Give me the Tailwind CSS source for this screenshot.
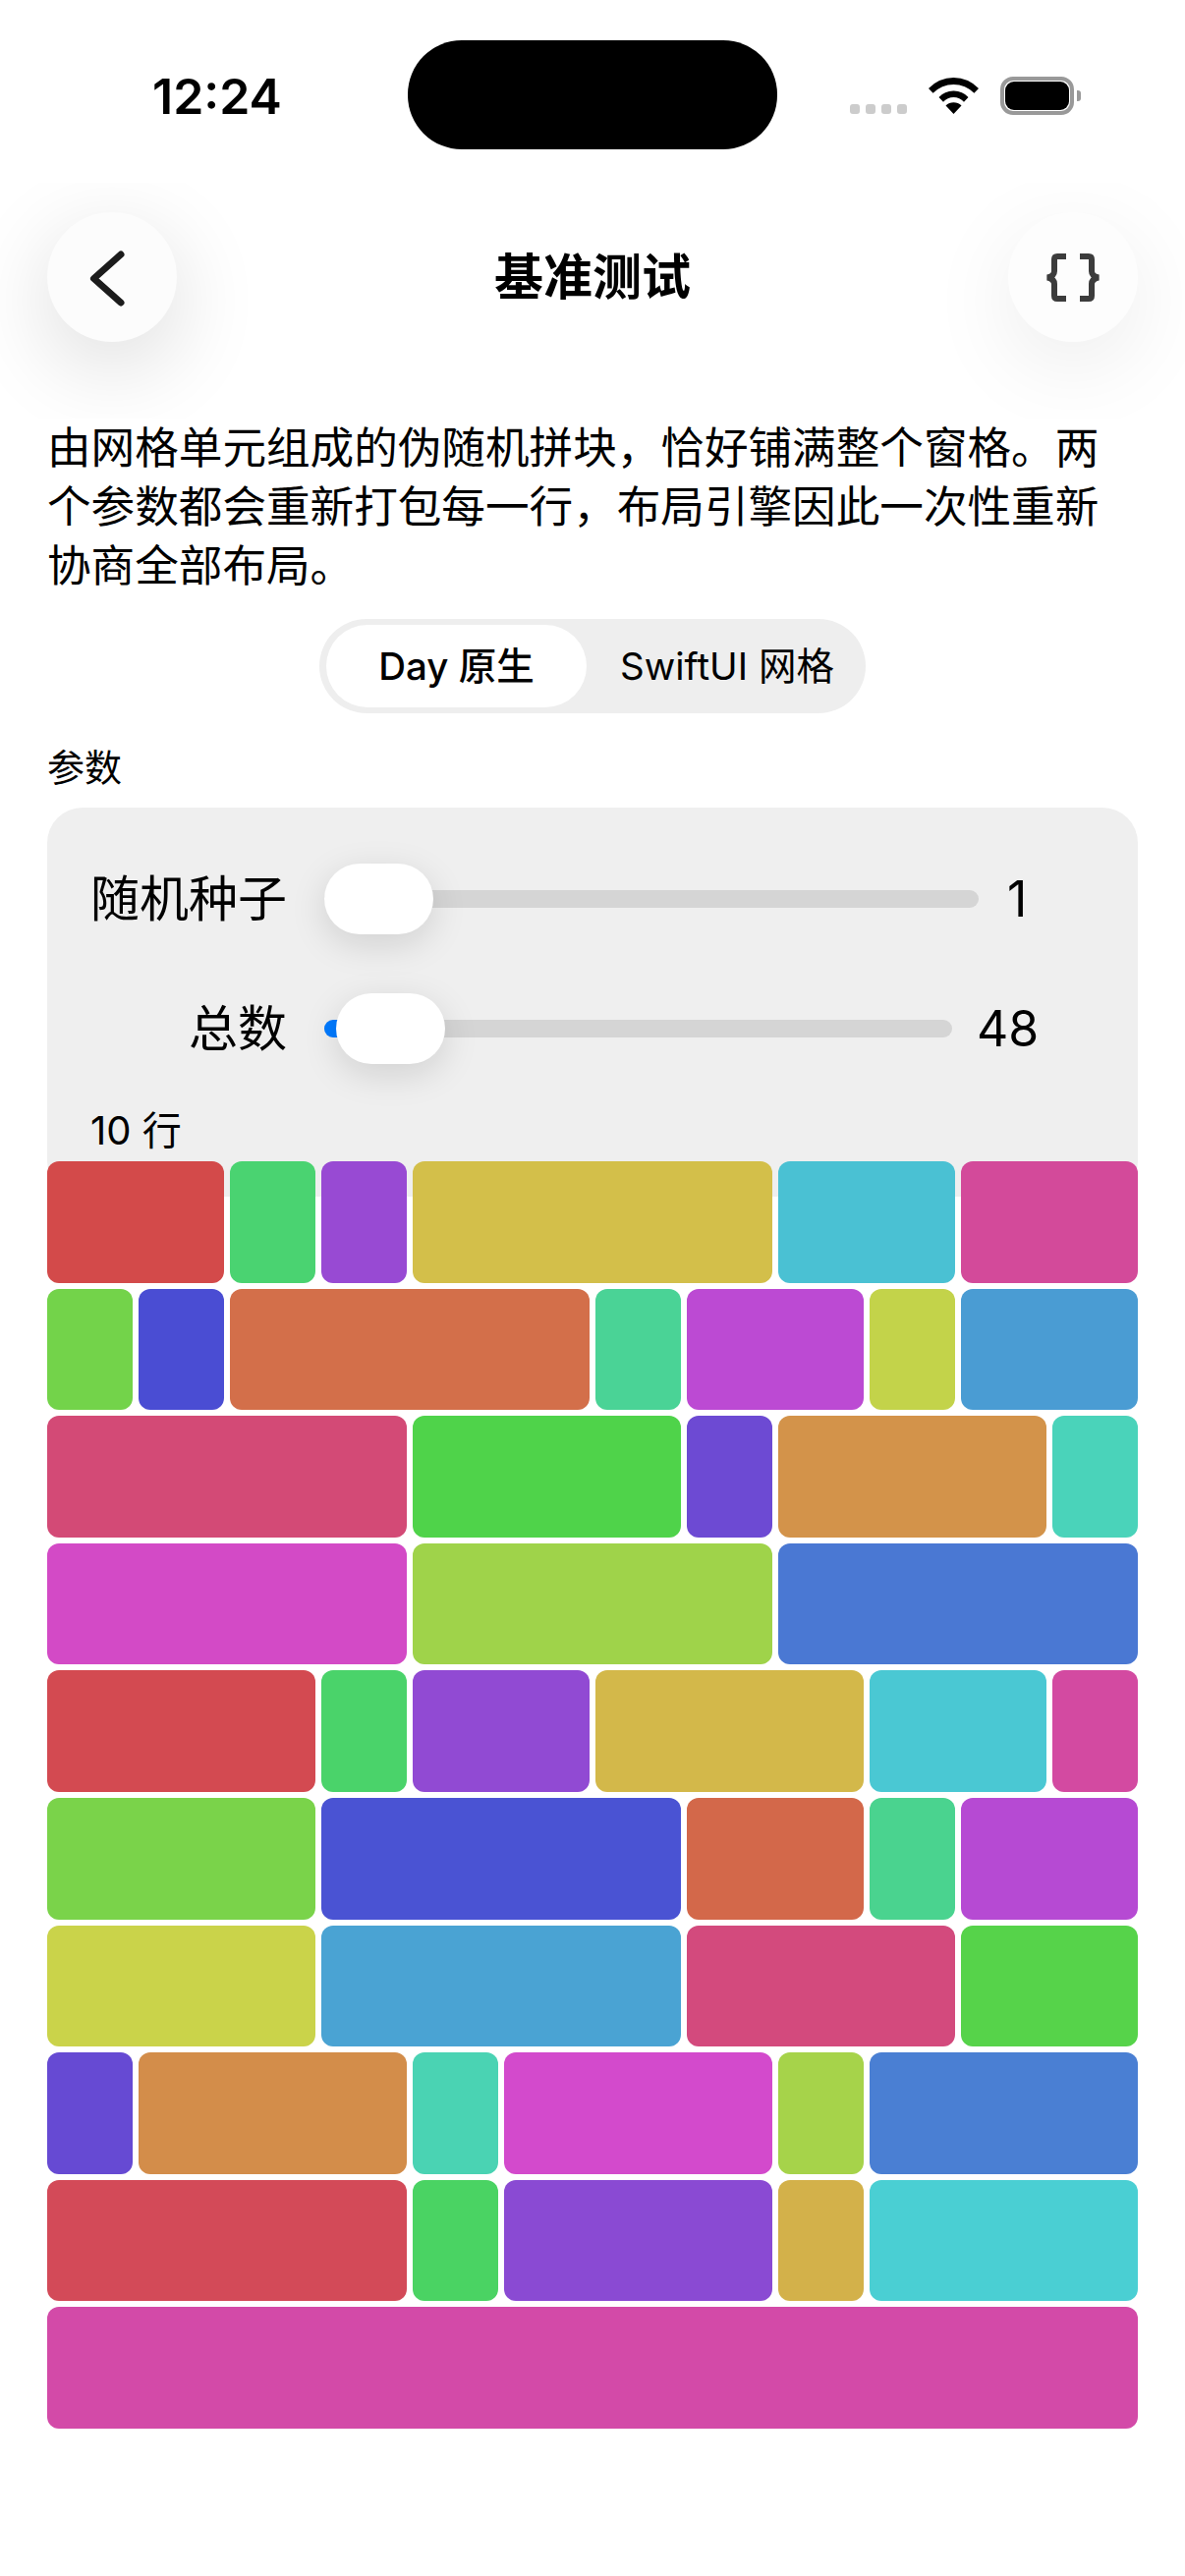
<!DOCTYPE html>
<html lang="zh-CN">
<head>
<meta charset="utf-8">
<script src="https://cdn.jsdelivr.net/npm/@tailwindcss/browser@4"></script>
</head>
<body class="bg-white">
<div class="w-[1206px] h-[2622px] overflow-hidden bg-white text-black font-[Inter,'Noto_Sans_CJK_SC',sans-serif]">
  <!-- status bar -->
  <div class="flex h-[186px]">
    <div class="w-[415px] pl-[155px] pt-[66px] text-[50px] leading-[64px] font-semibold">12:24</div>
    <div class="w-[376px] h-[111px] mt-[41px] rounded-[55px] bg-black"></div>
    <div class="flex items-start pl-[74px]">
      <div class="flex gap-[6px] mt-[106px]">
        <div class="w-[10px] h-[10px] rounded-[3px] bg-[#cccccc]"></div>
        <div class="w-[10px] h-[10px] rounded-[3px] bg-[#cccccc]"></div>
        <div class="w-[10px] h-[10px] rounded-[3px] bg-[#cccccc]"></div>
        <div class="w-[10px] h-[10px] rounded-[3px] bg-[#cccccc]"></div>
      </div>
      <svg class="ml-[22px] mt-[79px]" width="51" height="37" viewBox="0 0 51 37">
        <path d="M25.5 37 L17.5 28.5 A11.5 11.5 0 0 1 33.5 28.5 Z" fill="#000"/>
        <path d="M25.5 13.5 A20 20 0 0 1 40.5 20 L36 24.8 A14 14 0 0 0 15 24.8 L10.5 20 A20 20 0 0 1 25.5 13.5 Z" fill="#000"/>
        <path d="M25.5 0 A36 36 0 0 1 51 11 L46.4 15.8 A29 29 0 0 0 4.6 15.8 L0 11 A36 36 0 0 1 25.5 0 Z" fill="#000"/>
      </svg>
      <div class="ml-[22px] mt-[78px] w-[75px] h-[39px] rounded-[13px] border-[4px] border-[#999999] p-[1px]">
        <div class="w-full h-full rounded-[9px] bg-black"></div>
      </div>
      <div class="ml-[3px] mt-[92px] w-[4px] h-[11px] rounded-r-[3px] bg-[#999999]"></div>
    </div>
  </div>

  <!-- nav bar -->
  <div class="h-[240px] overflow-hidden flex items-start justify-between px-[48px] pt-[30px]">
    <div class="w-[132px] h-[132px] rounded-full bg-[#fcfcfc] shadow-[0_24px_90px_rgba(0,0,0,0.14)] flex items-center justify-center">
      <svg width="132" height="132" viewBox="0 0 132 132" fill="none">
        <path d="M75 43 L47.5 67.5 L75 92" stroke="#1c1c1c" stroke-width="7" stroke-linecap="round" stroke-linejoin="round"/>
      </svg>
    </div>
    <div class="mt-[34px] text-[50px] leading-[64px] font-semibold">基准测试</div>
    <div class="w-[132px] h-[132px] rounded-full bg-[#fdfdfd] shadow-[0_24px_90px_rgba(0,0,0,0.08)] flex items-center justify-center">
      <svg width="132" height="132" viewBox="0 0 132 132" fill="none">
        <path d="M59 45 H50 Q47 45 47 48 V60 Q47 65 40 66.5 Q47 68 47 73 V85 Q47 88 50 88 H59" stroke="#3c3c3c" stroke-width="6"/>
        <path d="M73 45 H82 Q85 45 85 48 V60 Q85 65 92 66.5 Q85 68 85 73 V85 Q85 88 82 88 H73" stroke="#3c3c3c" stroke-width="6"/>
      </svg>
    </div>
  </div>

  <!-- content -->
  <div class="px-[48px]">
    <p class="text-[44.6px] leading-[60px]">由网格单元组成的伪随机拼块，恰好铺满整个窗格。两个参数都会重新打包每一行，布局引擎因此一次性重新协商全部布局。</p>

    <div class="flex justify-center mt-[24px]">
      <div class="w-[556px] h-[96px] rounded-[48px] bg-[#eeeeee] p-[6px] pl-[7px] flex items-center text-[38.5px] leading-[50px]">
        <div class="w-[265px] h-[84px] rounded-[42px] bg-white flex items-center justify-center font-medium">Day 原生</div>
        <div class="flex-1 flex items-center justify-center pl-[8px]">SwiftUI 网格</div>
      </div>
    </div>

    <div class="mt-[30px] text-[38px] leading-[50px]">参数</div>

    <div class="mt-[16px] h-[396px] rounded-[36px] bg-[#efefef] pt-[57px] pl-[44px]">
      <div class="flex items-center h-[72px]">
        <div class="w-[200px] whitespace-nowrap text-right text-[50px] leading-[60px]">随机种子</div>
        <div class="relative ml-[38px] w-[666px] h-[18px] rounded-full bg-[#d5d5d5]">
          <div class="absolute left-0 top-[-27px] w-[111px] h-[72px] rounded-[36px] bg-white shadow-[0_10px_36px_rgba(0,0,0,0.13)]"></div>
        </div>
        <div class="ml-[29px] text-[50px] leading-[60px]">1</div>
      </div>
      <div class="flex items-center h-[72px] mt-[60px]">
        <div class="w-[200px] whitespace-nowrap text-right text-[50px] leading-[60px]">总数</div>
        <div class="relative ml-[38px] w-[639px] h-[18px] rounded-full bg-[#d5d5d5]">
          <div class="absolute left-0 top-0 w-[30px] h-[18px] rounded-l-full bg-[#007aff]"></div>
          <div class="absolute left-[12px] top-[-27px] w-[111px] h-[72px] rounded-[36px] bg-white shadow-[0_10px_36px_rgba(0,0,0,0.13)]"></div>
        </div>
        <div class="ml-[25px] text-[50px] leading-[60px]">48</div>
      </div>
      <div class="mt-[43px] text-[40px] leading-[50px]">10 行</div>
    </div>

    <!-- tiles -->
    <div class="relative mt-[-36px] grid grid-cols-12 gap-[6px] auto-rows-[123.6px]">
      <div class="col-span-2 rounded-[12px] bg-[hsl(0,61%,56%)]"></div>
      <div class="col-span-1 rounded-[12px] bg-[hsl(137,61%,56%)]"></div>
      <div class="col-span-1 rounded-[12px] bg-[hsl(274,61%,56%)]"></div>
      <div class="col-span-4 rounded-[12px] bg-[hsl(51,61%,56%)]"></div>
      <div class="col-span-2 rounded-[12px] bg-[hsl(188,61%,56%)]"></div>
      <div class="col-span-2 rounded-[12px] bg-[hsl(325,61%,56%)]"></div>

      <div class="col-span-1 rounded-[12px] bg-[hsl(102,61%,56%)]"></div>
      <div class="col-span-1 rounded-[12px] bg-[hsl(239,61%,56%)]"></div>
      <div class="col-span-4 rounded-[12px] bg-[hsl(16,61%,56%)]"></div>
      <div class="col-span-1 rounded-[12px] bg-[hsl(153,61%,56%)]"></div>
      <div class="col-span-2 rounded-[12px] bg-[hsl(290,61%,56%)]"></div>
      <div class="col-span-1 rounded-[12px] bg-[hsl(67,61%,56%)]"></div>
      <div class="col-span-2 rounded-[12px] bg-[hsl(204,61%,56%)]"></div>

      <div class="col-span-4 rounded-[12px] bg-[hsl(341,61%,56%)]"></div>
      <div class="col-span-3 rounded-[12px] bg-[hsl(118,61%,56%)]"></div>
      <div class="col-span-1 rounded-[12px] bg-[hsl(255,61%,56%)]"></div>
      <div class="col-span-3 rounded-[12px] bg-[hsl(32,61%,56%)]"></div>
      <div class="col-span-1 rounded-[12px] bg-[hsl(169,61%,56%)]"></div>

      <div class="col-span-4 rounded-[12px] bg-[hsl(306,61%,56%)]"></div>
      <div class="col-span-4 rounded-[12px] bg-[hsl(83,61%,56%)]"></div>
      <div class="col-span-4 rounded-[12px] bg-[hsl(220,61%,56%)]"></div>

      <div class="col-span-3 rounded-[12px] bg-[hsl(357,61%,56%)]"></div>
      <div class="col-span-1 rounded-[12px] bg-[hsl(134,61%,56%)]"></div>
      <div class="col-span-2 rounded-[12px] bg-[hsl(271,61%,56%)]"></div>
      <div class="col-span-3 rounded-[12px] bg-[hsl(48,61%,56%)]"></div>
      <div class="col-span-2 rounded-[12px] bg-[hsl(185,61%,56%)]"></div>
      <div class="col-span-1 rounded-[12px] bg-[hsl(322,61%,56%)]"></div>

      <div class="col-span-3 rounded-[12px] bg-[hsl(99,61%,56%)]"></div>
      <div class="col-span-4 rounded-[12px] bg-[hsl(236,61%,56%)]"></div>
      <div class="col-span-2 rounded-[12px] bg-[hsl(13,61%,56%)]"></div>
      <div class="col-span-1 rounded-[12px] bg-[hsl(150,61%,56%)]"></div>
      <div class="col-span-2 rounded-[12px] bg-[hsl(287,61%,56%)]"></div>

      <div class="col-span-3 rounded-[12px] bg-[hsl(64,61%,56%)]"></div>
      <div class="col-span-4 rounded-[12px] bg-[hsl(201,61%,56%)]"></div>
      <div class="col-span-3 rounded-[12px] bg-[hsl(338,61%,56%)]"></div>
      <div class="col-span-2 rounded-[12px] bg-[hsl(115,61%,56%)]"></div>

      <div class="col-span-1 rounded-[12px] bg-[hsl(252,61%,56%)]"></div>
      <div class="col-span-3 rounded-[12px] bg-[hsl(29,61%,56%)]"></div>
      <div class="col-span-1 rounded-[12px] bg-[hsl(166,61%,56%)]"></div>
      <div class="col-span-3 rounded-[12px] bg-[hsl(303,61%,56%)]"></div>
      <div class="col-span-1 rounded-[12px] bg-[hsl(80,61%,56%)]"></div>
      <div class="col-span-3 rounded-[12px] bg-[hsl(217,61%,56%)]"></div>

      <div class="col-span-4 rounded-[12px] bg-[hsl(354,61%,56%)]"></div>
      <div class="col-span-1 rounded-[12px] bg-[hsl(131,61%,56%)]"></div>
      <div class="col-span-3 rounded-[12px] bg-[hsl(268,61%,56%)]"></div>
      <div class="col-span-1 rounded-[12px] bg-[hsl(45,61%,56%)]"></div>
      <div class="col-span-3 rounded-[12px] bg-[hsl(182,61%,56%)]"></div>

      <div class="col-span-12 rounded-[12px] bg-[hsl(319,61%,56%)]"></div>
    </div>
  </div>
</div>
</body>
</html>
